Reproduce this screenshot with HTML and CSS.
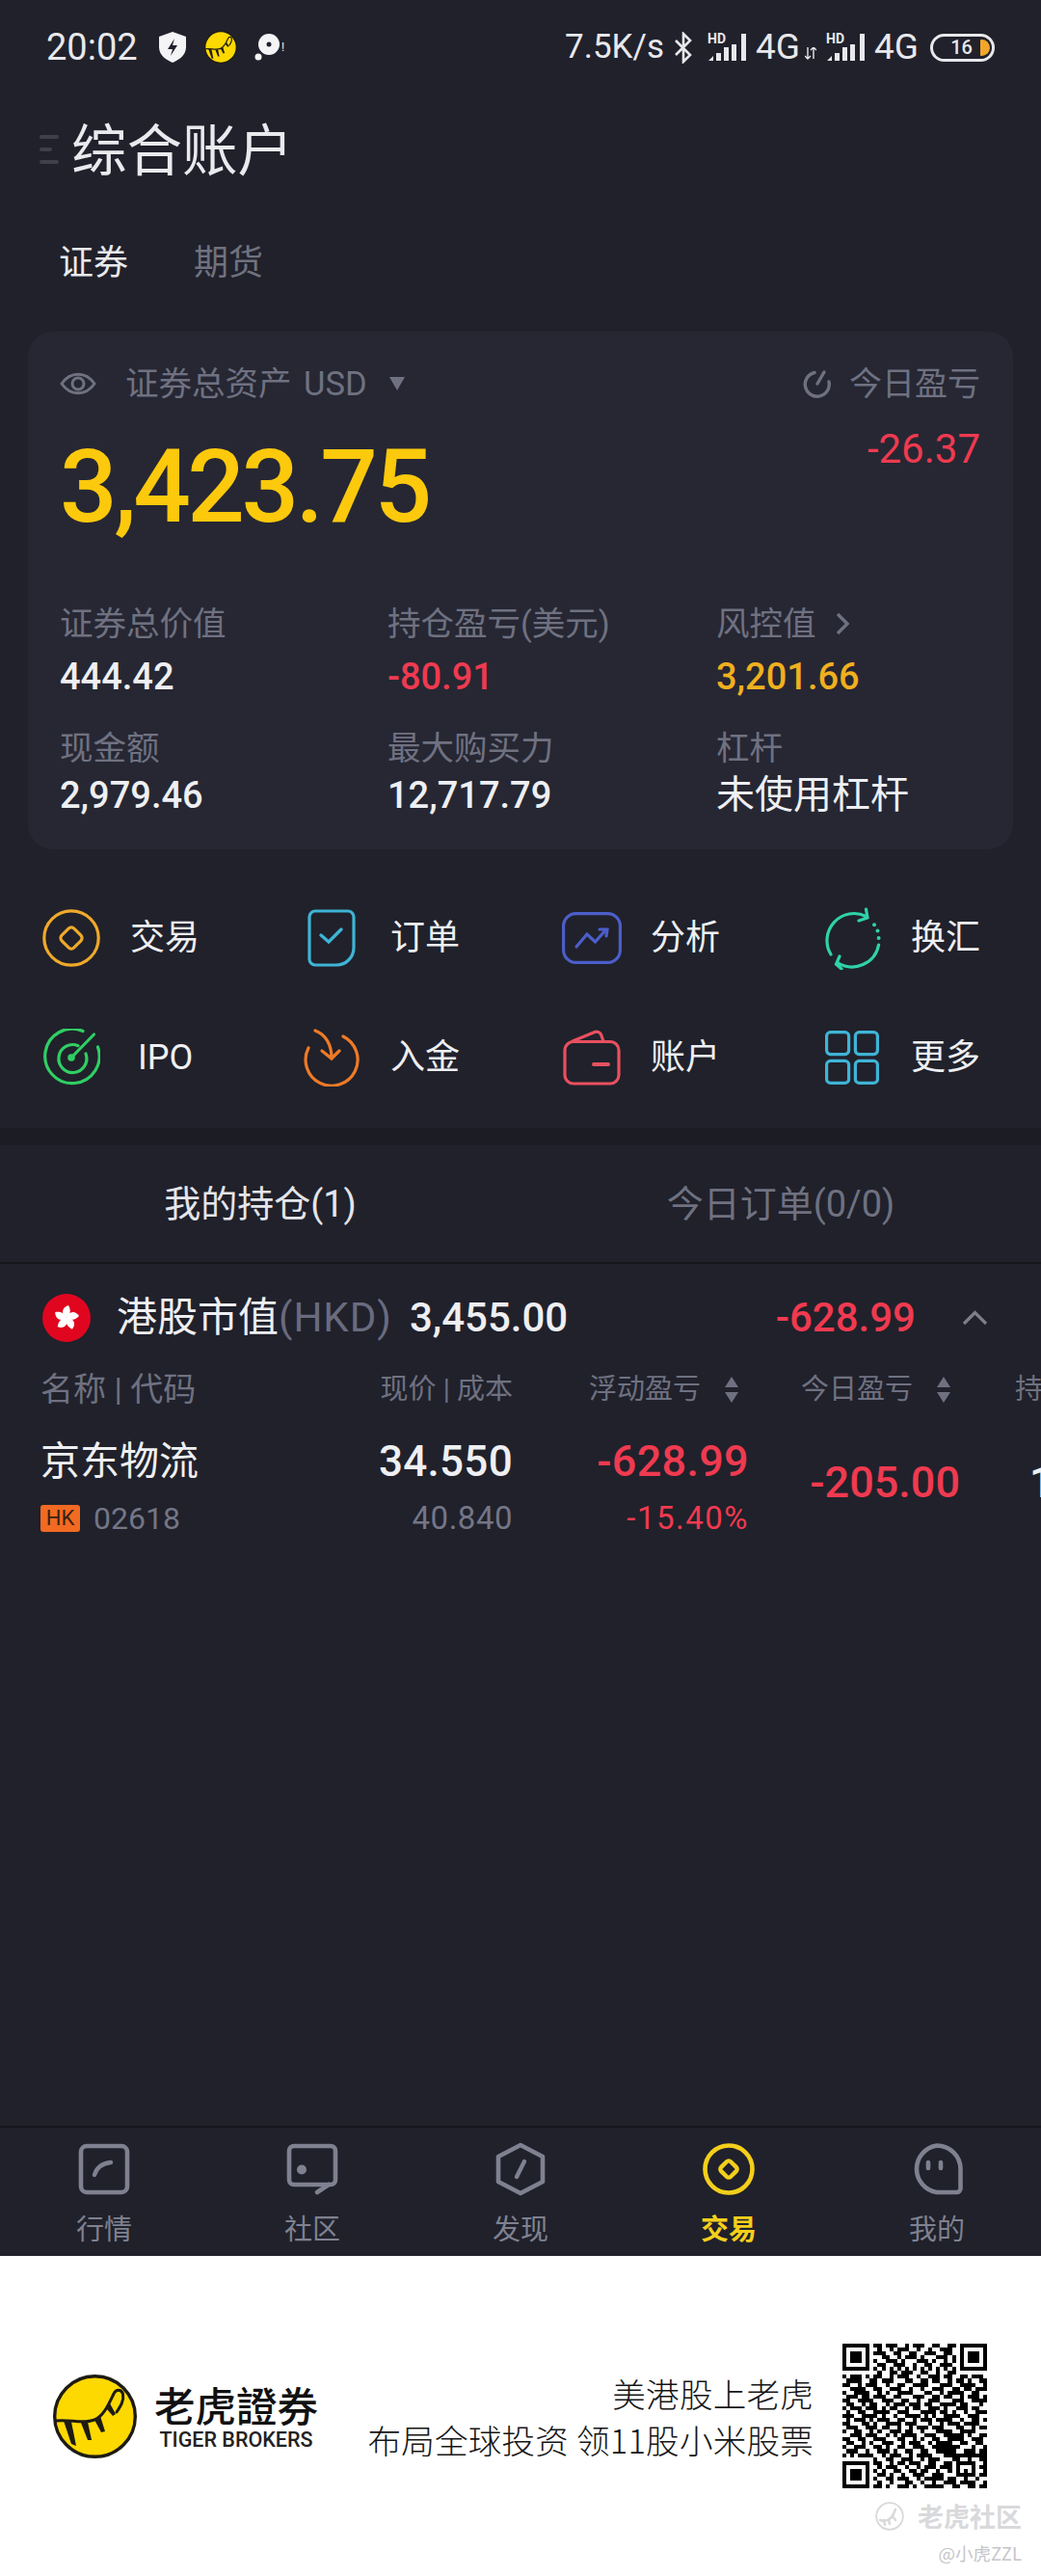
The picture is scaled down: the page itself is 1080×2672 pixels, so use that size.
FILE: index.html
```html
<!DOCTYPE html>
<html lang="zh-CN">
<head>
<meta charset="utf-8">
<title>综合账户</title>
<link rel="stylesheet" href="styles.css">
</head>
<body>
<svg class="defs" width="0" height="0" aria-hidden="true">
  <defs>
    <symbol id="tiger" viewBox="0 0 87 87">
      <circle cx="43.5" cy="43.5" r="41.8" fill="#fdd900" stroke="#1d1b14" stroke-width="3.4"/>
      <path d="M3 48C18 46 30 52 43 47C53 43 58 30 63 20C65 15 71 15 72.500 20C74 27 70 33 66 39" fill="none" stroke="#1d1b14" stroke-width="3" stroke-linecap="round"/>
      <path d="M11 48L19 49L24 74L19 72Z" fill="#1d1b14"/>
      <path d="M29 50L36 49L40 68L36 68Z" fill="#1d1b14"/>
      <path d="M43 47L49 43L54 59L50 60Z" fill="#1d1b14"/>
      <path d="M56 36L59 30L65 41L62 43Z" fill="#1d1b14"/>
    </symbol>
    <symbol id="petal" viewBox="0 0 50 50">
      <path d="M25 25C19 21 20 14 27 12C30 17 29 22 25 25Z" fill="#fff"/>
    </symbol>
  </defs>
</svg>
<div class="phone">
  <div class="app">
    <div class="status">
      <div class="status-group">
        <span class="clock">20:02</span>
        <svg class="st-shield" viewBox="0 0 28 32"><path d="M14 0L28 5V16C28 24 21 29 14 32C7 29 0 24 0 16V5Z" fill="#f4f4f6"/><path d="M16 7L9 18H14L12 25L19 14H14Z" fill="#20212b"/></svg>
        <svg class="st-coin"><use href="#tiger"/></svg>
        <span class="st-disc">
          <svg class="st-disc-icon" viewBox="0 0 26 28"><circle cx="15" cy="11" r="11" fill="#f4f4f6"/><circle cx="15" cy="11" r="2.500" fill="#20212b"/><circle cx="4" cy="24" r="3.500" fill="#f4f4f6"/></svg>
          <span class="st-bang">!</span>
        </span>
      </div>
      <div class="status-group status-right">
        <span class="speed">7.5K/s</span>
        <svg class="st-bt" viewBox="0 0 20 33"><path d="M2 9L17 24L10 31V2L17 9L2 24" fill="none" stroke="#e8e8ec" stroke-width="2.600"/></svg>
        <span class="signal">
          <span class="hd">HD</span>
          <svg class="bars" viewBox="0 0 41 30"><path d="M1 29L6 24V29ZM9 21H14V29H9ZM17 15H22V29H17ZM25 12H30V29H25ZM35 1H40V29H35Z" fill="#e8e8ec"/></svg>
        </span>
        <span class="net">4G</span>
        <svg class="st-arrows" viewBox="0 0 12 13"><path d="M3 0V12M0 9L3 12L6 9M9 12V0M6 3L9 0L12 3" fill="none" stroke="#e8e8ec" stroke-width="1.400"/></svg>
        <span class="signal signal-b">
          <span class="hd">HD</span>
          <svg class="bars" viewBox="0 0 41 30"><path d="M1 29L6 24V29ZM9 21H14V29H9ZM17 15H22V29H17ZM25 12H30V29H25ZM35 1H40V29H35Z" fill="#e8e8ec"/></svg>
        </span>
        <span class="net">4G</span>
        <span class="battery"><span class="battery-num">16</span><span class="battery-fill"></span></span>
      </div>
    </div>

    <header class="title-row">
      <span class="menu-bars"><i></i><i class="short"></i><i></i></span>
      <h1 class="title">综合账户</h1>
    </header>

    <nav class="seg">
      <span class="seg-on">证券</span>
      <span class="seg-off">期货</span>
    </nav>

    <section class="card">
      <div class="card-head">
        <div>
          <div class="asset-label">
            <svg class="eye" viewBox="0 0 38 28"><path d="M2 14C11 1 27 1 36 14C27 27 11 27 2 14Z" fill="none" stroke="#6f7181" stroke-width="3"/><circle cx="19" cy="14" r="6" fill="none" stroke="#6f7181" stroke-width="3"/></svg>
            <span class="asset-text">证券总资产 USD</span>
            <svg class="caret" viewBox="0 0 16 14"><path d="M0 0H16L8 14Z" fill="#6f7181"/></svg>
          </div>
          <div class="big">3,423.75</div>
        </div>
        <div class="head-right">
          <div class="asset-label">
            <svg class="refresh" viewBox="0 0 30 30"><path d="M12 3.500A12.500 12.500 0 1 0 27 13" fill="none" stroke="#6f7181" stroke-width="3.400" stroke-linecap="round"/><path d="M22 3L15 15" fill="none" stroke="#6f7181" stroke-width="3.400" stroke-linecap="round"/></svg>
            <span>今日盈亏</span>
          </div>
          <div class="today red">-26.37</div>
        </div>
      </div>
      <div class="stats">
        <div class="stat">
          <div class="stat-label">证券总价值</div>
          <div class="stat-val">444.42</div>
        </div>
        <div class="stat">
          <div class="stat-label">持仓盈亏(美元)</div>
          <div class="stat-val red">-80.91</div>
        </div>
        <div class="stat">
          <div class="stat-label">风控值<svg class="more" viewBox="0 0 14 24"><path d="M2 2L12 12L2 22" fill="none" stroke="#6f7181" stroke-width="3.400"/></svg></div>
          <div class="stat-val gold">3,201.66</div>
        </div>
        <div class="stat stat-low">
          <div class="stat-label">现金额</div>
          <div class="stat-val">2,979.46</div>
        </div>
        <div class="stat stat-low">
          <div class="stat-label">最大购买力</div>
          <div class="stat-val">12,717.79</div>
        </div>
        <div class="stat stat-low">
          <div class="stat-label">杠杆</div>
          <div class="stat-val stat-cjk">未使用杠杆</div>
        </div>
      </div>
    </section>

    <section class="tools">
      <div class="tool">
        <span class="tool-icon"><svg class="ti-60" viewBox="0 0 60 60"><circle cx="30" cy="30" r="28.200" fill="none" stroke="#efa92a" stroke-width="3.200"/><rect x="21" y="21" width="18" height="18" rx="4" transform="rotate(45 30 30)" fill="none" stroke="#efa92a" stroke-width="3.200"/></svg></span>
        <span>交易</span>
      </div>
      <div class="tool">
        <span class="tool-icon"><svg class="ti-doc" viewBox="0 0 50 60"><path d="M8 2H42A6 6 0 0 1 48 8V40C48 50 40 58 30 58H8A6 6 0 0 1 2 52V8A6 6 0 0 1 8 2Z" fill="none" stroke="#3fb4d6" stroke-width="3.200"/><path d="M14 27L22 34L35 21" fill="none" stroke="#3fb4d6" stroke-width="3.400" stroke-linecap="round"/></svg></span>
        <span>订单</span>
      </div>
      <div class="tool">
        <span class="tool-icon"><svg class="ti-chart" viewBox="0 0 62 54"><rect x="1.600" y="1.600" width="58.800" height="50.800" rx="13" fill="none" stroke="#4c5ec9" stroke-width="3.200"/><path d="M15 36L26 23L34.500 31L46 18M39 18H47L46 25" fill="none" stroke="#4c5ec9" stroke-width="3.200" stroke-linecap="round"/></svg></span>
        <span>分析</span>
      </div>
      <div class="tool">
        <span class="tool-icon"><svg class="ti-swap" viewBox="0 0 64 66"><path d="M10 50A28 28 0 0 1 46.500 10.500M46.500 3L48 12L39 15M59.600 40A28 28 0 0 1 17 58.500M19 52L15.500 60L21 65" fill="none" stroke="#2fd3a9" stroke-width="3.200" stroke-linecap="round"/><circle cx="55" cy="19.300" r="2" fill="#2fd3a9"/><circle cx="58.500" cy="25.500" r="2" fill="#2fd3a9"/><circle cx="59.600" cy="33" r="2" fill="#2fd3a9"/></svg></span>
        <span>换汇</span>
      </div>
      <div class="tool">
        <span class="tool-icon"><svg class="ti-60" viewBox="0 0 60 60"><path d="M42 2.500A28.200 28.200 0 1 0 57.500 19" fill="none" stroke="#2fcf63" stroke-width="3.200" stroke-linecap="round"/><path d="M37 17.700A14.500 14.500 0 1 0 45 26" fill="none" stroke="#2fcf63" stroke-width="3.200" stroke-linecap="round"/><path d="M30 30L53.500 6" fill="none" stroke="#2fcf63" stroke-width="3.200" stroke-linecap="round"/><circle cx="30" cy="30" r="3.800" fill="#2fcf63"/></svg></span>
        <span class="tool-ipo">IPO</span>
      </div>
      <div class="tool">
        <span class="tool-icon"><svg class="ti-in" viewBox="0 0 58 60"><path d="M5 20A27 27 0 1 0 41 8" fill="none" stroke="#ee7a26" stroke-width="3.200" stroke-linecap="round"/><path d="M12 2C23 6 29 17 29 30M19 23L29 31L37 23" fill="none" stroke="#ee7a26" stroke-width="3.200" stroke-linecap="round"/></svg></span>
        <span>入金</span>
      </div>
      <div class="tool">
        <span class="tool-icon"><svg class="ti-wallet" viewBox="0 0 60 58"><rect x="2" y="12.500" width="56" height="43.500" rx="9" fill="none" stroke="#e8505f" stroke-width="3.200"/><path d="M10 12L33 2.500C36 1.500 38.500 3 39.500 5L42 12" fill="none" stroke="#e8505f" stroke-width="3.200" stroke-linecap="round"/><path d="M32 36H47" fill="none" stroke="#e8505f" stroke-width="4" stroke-linecap="round"/></svg></span>
        <span>账户</span>
      </div>
      <div class="tool">
        <span class="tool-icon"><svg class="ti-grid" viewBox="0 0 56 56"><rect x="1.600" y="1.600" width="23" height="23" rx="4" fill="none" stroke="#3fb4d6" stroke-width="3.200"/><rect x="31.400" y="1.600" width="23" height="23" rx="4" fill="none" stroke="#3fb4d6" stroke-width="3.200"/><rect x="1.600" y="31.400" width="23" height="23" rx="4" fill="none" stroke="#3fb4d6" stroke-width="3.200"/><rect x="31.400" y="31.400" width="23" height="23" rx="4" fill="none" stroke="#3fb4d6" stroke-width="3.200"/></svg></span>
        <span>更多</span>
      </div>
    </section>

    <div class="strip"></div>

    <nav class="pos-tabs">
      <span class="pos-on">我的持仓(1)</span>
      <span class="pos-off">今日订单(0/0)</span>
    </nav>

    <section class="holdings">
      <div class="market">
        <svg class="flag" viewBox="0 0 50 50">
          <circle cx="25" cy="25" r="25" fill="#e1061f"/>
          <g class="petals">
            <use href="#petal" width="50" height="50"/>
            <use href="#petal" width="50" height="50" transform="rotate(72 25 25)"/>
            <use href="#petal" width="50" height="50" transform="rotate(144 25 25)"/>
            <use href="#petal" width="50" height="50" transform="rotate(216 25 25)"/>
            <use href="#petal" width="50" height="50" transform="rotate(288 25 25)"/>
          </g>
        </svg>
        <span class="market-name">港股市值<span class="muted">(HKD)</span></span>
        <span class="market-val">3,455.00</span>
        <span class="market-pl red">-628.99</span>
        <svg class="chev" viewBox="0 0 27 16"><path d="M2 14L13.500 2.500L25 14" fill="none" stroke="#7d7f8c" stroke-width="3.200"/></svg>
      </div>

      <div class="cols">
        <span class="col-name">名称 | 代码</span>
        <span class="col-head col-price">现价 | 成本</span>
        <span class="col-head col-float">浮动盈亏<svg class="sort" viewBox="0 0 14 27"><path d="M7 0L14 11H0ZM7 27L0 16H14Z" fill="#6f7181"/></svg></span>
        <span class="col-head col-today">今日盈亏<svg class="sort" viewBox="0 0 14 27"><path d="M7 0L14 11H0ZM7 27L0 16H14Z" fill="#6f7181"/></svg></span>
        <span class="col-head col-qty">持仓</span>
      </div>

      <div class="row">
        <div class="cell-name">
          <div class="stock">京东物流</div>
          <div class="code"><span class="hk">HK</span><span>02618</span></div>
        </div>
        <div class="cell-num">
          <div class="num-a">34.550</div>
          <div class="num-b">40.840</div>
        </div>
        <div class="cell-num">
          <div class="num-a red">-628.99</div>
          <div class="num-b red">-15.40%</div>
        </div>
        <div class="cell-today red">-205.00</div>
        <div class="cell-qty">100</div>
      </div>
    </section>

    <nav class="tabbar">
      <div class="tab">
        <svg class="tab-icon" viewBox="0 0 54 54"><rect x="3" y="3" width="48" height="48" rx="6" fill="none" stroke="#7f8190" stroke-width="4.600"/><path d="M17 33C19 26 25 21 34 20" fill="none" stroke="#7f8190" stroke-width="4.400" stroke-linecap="round"/></svg>
        <span>行情</span>
      </div>
      <div class="tab">
        <svg class="tab-icon" viewBox="0 0 54 54"><rect x="3" y="3" width="48" height="40" rx="5" fill="none" stroke="#7f8190" stroke-width="4.600"/><path d="M44 43L32 51" fill="none" stroke="#7f8190" stroke-width="4.600" stroke-linecap="round"/><circle cx="16" cy="27.500" r="5" fill="#7f8190"/></svg>
        <span>社区</span>
      </div>
      <div class="tab">
        <svg class="tab-icon" viewBox="0 0 54 56"><path d="M27 3L50 15V41L27 53L4 41V15Z" fill="none" stroke="#7f8190" stroke-width="4.600" stroke-linejoin="round"/><path d="M31 20L23 36" fill="none" stroke="#7f8190" stroke-width="4.400" stroke-linecap="round"/></svg>
        <span>发现</span>
      </div>
      <div class="tab tab-on">
        <svg class="tab-icon" viewBox="0 0 54 54"><circle cx="27" cy="27" r="24.500" fill="none" stroke="#f4cf1b" stroke-width="4.600"/><rect x="20" y="20" width="14" height="14" rx="3" transform="rotate(45 27 27)" fill="none" stroke="#f4cf1b" stroke-width="4.400"/></svg>
        <span>交易</span>
      </div>
      <div class="tab">
        <svg class="tab-icon" viewBox="0 0 54 54"><path d="M27 2.500A24.500 24.500 0 0 1 51.500 27V47A4 4 0 0 1 47.500 51H27A24.500 24.500 0 0 1 27 2.500Z" fill="none" stroke="#7f8190" stroke-width="4.600"/><path d="M18 20V26M31 20V26" fill="none" stroke="#7f8190" stroke-width="4.600" stroke-linecap="round"/></svg>
        <span>我的</span>
      </div>
    </nav>
  </div>

  <footer class="promo">
    <div class="brand">
      <svg class="brand-logo"><use href="#tiger"/></svg>
      <div class="brand-text">
        <div class="brand-cn">老虎證券</div>
        <div class="brand-en">TIGER BROKERS</div>
      </div>
    </div>
    <div class="slogan">
      <div>美港股上老虎</div>
      <div>布局全球投资 领11股小米股票</div>
    </div>
    <svg class="qr" viewBox="0 0 37 37" shape-rendering="crispEdges">
      <path fill="#000" d="M0 0h7v7H0zM1 1v5h5V1zM2 2h3v3H2zM30 0h7v7h-7zM31 1v5h5V1zM32 2h3v3h-3zM0 30h7v7H0zM1 31v5h5v-5zM2 32h3v3H2z" fill-rule="evenodd"/>
      <path fill="none" stroke="#000" d="M8 .5h2M11 .5h3M16 .5h1M18 .5h3M23 .5h2M27 .5h2M9 1.500h1M12 1.500h1M14 1.500h3M19 1.500h1M22 1.500h1M25 1.500h3M8 2.500h3M13 2.500h2M17 2.500h2M21 2.500h3M26 2.500h2M10 3.500h2M14 3.500h1M16 3.500h3M20 3.500h1M24 3.500h3M28 3.500h1M8 4.500h1M11 4.500h3M15 4.500h1M19 4.500h3M23 4.500h1M26 4.500h1M28 4.500h1M9 5.500h2M13 5.500h3M18 5.500h1M21 5.500h2M25 5.500h3M8 6.500h1M10 6.500h1M12 6.500h1M14 6.500h1M16 6.500h1M18 6.500h1M20 6.500h1M22 6.500h1M24 6.500h1M26 6.500h1M28 6.500h1M9 7.500h1M12 7.500h2M15 7.500h3M20 7.500h2M24 7.500h1M27 7.500h2M0 8.500h1M2 8.500h3M6 8.500h1M8 8.500h2M12 8.500h1M14 8.500h3M19 8.500h1M22 8.500h3M26 8.500h2M30 8.500h2M33 8.500h3M1 9.500h4M7 9.500h2M10 9.500h3M16 9.500h2M20 9.500h2M23 9.500h2M27 9.500h1M29 9.500h2M32 9.500h1M35 9.500h2M0 10.500h2M4 10.500h1M6 10.500h3M11 10.500h1M14 10.500h2M18 10.500h4M25 10.500h3M30 10.500h4M36 10.500h1M2 11.500h4M8 11.500h2M12 11.500h3M17 11.500h1M20 11.500h1M23 11.500h3M28 11.500h2M31 11.500h2M34 11.500h3M0 12.500h1M3 12.500h4M9 12.500h1M11 12.500h1M14 12.500h4M21 12.500h2M25 12.500h1M27 12.500h4M33 12.500h2M1 13.500h3M5 13.500h2M8 13.500h3M13 13.500h2M18 13.500h3M23 13.500h2M26 13.500h2M30 13.500h1M32 13.500h3M36 13.500h1M0 14.500h2M4 14.500h4M10 14.500h3M15 14.500h2M19 14.500h1M22 14.500h3M28 14.500h3M33 14.500h4M1 15.500h2M5 15.500h1M7 15.500h2M11 15.500h1M13 15.500h3M17 15.500h3M21 15.500h2M25 15.500h4M30 15.500h2M35 15.500h1M0 16.500h1M2 16.500h3M6 16.500h3M10 16.500h1M12 16.500h2M16 16.500h1M18 16.500h2M22 16.500h3M26 16.500h1M29 16.500h3M33 16.500h2M1 17.500h1M4 17.500h2M8 17.500h4M14 17.500h3M20 17.500h4M25 17.500h2M28 17.500h1M31 17.500h1M34 17.500h3M0 18.500h3M5 18.500h4M10 18.500h1M13 18.500h1M16 18.500h4M21 18.500h1M23 18.500h1M26 18.500h4M32 18.500h3M1 19.500h1M3 19.500h3M7 19.500h1M9 19.500h3M14 19.500h2M18 19.500h1M20 19.500h3M24 19.500h4M30 19.500h1M33 19.500h2M36 19.500h1M0 20.500h2M5 20.500h2M8 20.500h1M11 20.500h4M16 20.500h3M22 20.500h1M25 20.500h1M27 20.500h3M31 20.500h4M1 21.500h3M6 21.500h3M10 21.500h2M14 21.500h1M17 21.500h1M19 21.500h3M23 21.500h3M29 21.500h2M33 21.500h1M35 21.500h2M0 22.500h1M3 22.500h2M7 22.500h1M9 22.500h1M12 22.500h3M16 22.500h2M20 22.500h1M24 22.500h4M30 22.500h4M2 23.500h3M6 23.500h3M11 23.500h1M13 23.500h1M15 23.500h4M21 23.500h3M26 23.500h5M32 23.500h1M35 23.500h2M0 24.500h2M4 24.500h2M8 24.500h3M14 24.500h2M18 24.500h1M20 24.500h1M23 24.500h2M27 24.500h4M33 24.500h3M1 25.500h2M5 25.500h1M7 25.500h1M10 25.500h3M15 25.500h1M17 25.500h3M22 25.500h1M24 25.500h4M30 25.500h2M34 25.500h2M0 26.500h1M3 26.500h3M8 26.500h2M11 26.500h1M14 26.500h2M18 26.500h3M23 26.500h7M33 26.500h1M36 26.500h1M1 27.500h3M6 27.500h1M9 27.500h3M13 27.500h1M16 27.500h2M20 27.500h2M24 27.500h5M31 27.500h3M35 27.500h2M0 28.500h1M2 28.500h1M4 28.500h4M10 28.500h1M12 28.500h3M17 28.500h1M19 28.500h4M26 28.500h11M8 29.500h1M11 29.500h2M15 29.500h3M20 29.500h1M22 29.500h3M28 29.500h2M32 29.500h1M35 29.500h2M8 30.500h2M12 30.500h1M14 30.500h2M17 30.500h3M22 30.500h2M26 30.500h2M29 30.500h5M36 30.500h1M9 31.500h1M11 31.500h3M16 31.500h1M19 31.500h1M21 31.500h3M25 31.500h3M29 31.500h1M33 31.500h1M35 31.500h2M8 32.500h1M10 32.500h1M13 32.500h2M17 32.500h2M20 32.500h2M24 32.500h1M27 32.500h1M29 32.500h1M31 32.500h1M33 32.500h1M36 32.500h1M9 33.500h2M12 33.500h1M15 33.500h1M18 33.500h3M23 33.500h3M29 33.500h5M35 33.500h2M8 34.500h1M11 34.500h2M14 34.500h3M19 34.500h1M21 34.500h5M27 34.500h2M31 34.500h1M34 34.500h1M9 35.500h1M12 35.500h1M16 35.500h2M20 35.500h1M23 35.500h1M26 35.500h3M30 35.500h4M36 35.500h1M8 36.500h2M11 36.500h1M14 36.500h3M18 36.500h1M21 36.500h5M28 36.500h2M32 36.500h2M35 36.500h2"/>
    </svg>
    <div class="mark">
      <div class="mark-top">
        <svg class="mark-logo" viewBox="0 0 30 30"><circle cx="15" cy="15" r="13.800" fill="none" stroke="#d9d9dc" stroke-width="1.800"/><path d="M5 19C11 21 17 20 21 8M9 19L10 24M14 19L15 23M18 15L21 19" fill="none" stroke="#d9d9dc" stroke-width="2.400" stroke-linecap="round"/></svg>
        <span class="mark-cn">老虎社区</span>
      </div>
      <div class="mark-user">@小虎ZZL</div>
    </div>
  </footer>
</div>
</body>
</html>
```
FILE: styles.css
```css
* { box-sizing: border-box; }
html, body { margin: 0; padding: 0; }
body {
  width: 1080px;
  height: 2672px;
  overflow: hidden;
  font-family: Roboto, "Noto Sans CJK SC", sans-serif;
  background: #ffffff;
}
.defs { position: absolute; }
.phone { width: 1080px; height: 2672px; display: flex; flex-direction: column; }
.app {
  height: 2340px;
  background: #20212b;
  color: #eeeff2;
  display: flex;
  flex-direction: column;
  overflow: hidden;
}
.red { color: #ef3a50; }
.gold { color: #f0b01e; }
.muted { color: #696b7f; letter-spacing: 1px; }

/* status bar */
.status {
  height: 98px;
  padding: 0 48px;
  display: flex;
  align-items: center;
  justify-content: space-between;
}
.status-group { display: flex; align-items: center; }
.clock { font-size: 38px; line-height: 44px; color: #e8e8ec; width: 117px; }
.st-shield { width: 28px; height: 32px; }
.st-coin { width: 34px; height: 34px; margin-left: 19px; }
.st-disc { display: flex; align-items: center; margin-left: 18px; }
.st-disc-icon { width: 26px; height: 28px; }
.st-bang { font-size: 12px; line-height: 14px; color: #f4f4f6; margin-left: 2px; }
.speed { font-size: 35px; line-height: 40px; color: #e8e8ec; width: 113px; }
.st-bt { width: 20px; height: 33px; }
.signal { position: relative; width: 41px; height: 30px; margin-left: 15px; }
.signal-b { margin-left: 10px; }
.bars { display: block; width: 41px; height: 30px; }
.hd { position: absolute; left: 0; top: 0; font-size: 14px; font-weight: 700; line-height: 12px; color: #e8e8ec; }
.net { font-size: 37px; line-height: 40px; color: #e8e8ec; margin-left: 9px; width: 47px; }
.st-arrows { width: 12px; height: 13px; margin: 12px 0 0 4px; }
.battery {
  width: 67px;
  height: 29px;
  border: 3px solid #e8e8ec;
  border-radius: 15px;
  margin-left: 11px;
  position: relative;
  display: flex;
  align-items: center;
  justify-content: center;
}
.battery-num { font-size: 20px; font-weight: 500; line-height: 23px; color: #e8e8ec; margin-right: 2px; }
.battery-fill {
  position: absolute;
  right: 2px;
  top: 3px;
  width: 10px;
  height: 17px;
  background: #f2a62b;
  border-radius: 1px 9px 9px 1px;
}

/* title */
.title-row { height: 118px; padding-left: 41px; display: flex; align-items: center; gap: 13px; }
.menu-bars { width: 20px; display: flex; flex-direction: column; gap: 9px; margin-top: -4px; }
.menu-bars i { display: block; width: 20px; height: 4px; background: #3f404c; border-radius: 2px; }
.menu-bars .short { width: 13px; }
.title { margin: 2px 0 0; font-size: 57.500px; font-weight: 400; line-height: 70px; color: #e9eaee; }
.seg {
  height: 114px;
  margin-bottom: 14px;
  padding: 0 0 0 61px;
  display: flex;
  align-items: center;
  gap: 68px;
  font-size: 36px;
  line-height: 50px;
}
.seg-on { color: #e9eaee; }
.seg-off { color: #70727f; }

/* card */
.card {
  width: 1022px;
  height: 537px;
  margin-left: 29px;
  padding: 34px 34px 0 33px;
  background: #262733;
  border-radius: 26px;
}
.card-head { display: flex; justify-content: space-between; }
.asset-label { display: flex; align-items: center; height: 40px; font-size: 34px; line-height: 40px; color: #6f7181; white-space: nowrap; }
.asset-text { font-size: 34.500px; word-spacing: 4px; }
.eye { width: 38px; height: 28px; margin-right: 30px; }
.caret { width: 16px; height: 14px; margin-left: 23px; }
.big { margin-top: 38px; font-size: 105px; font-weight: 500; line-height: 100px; letter-spacing: -3.500px; color: #fcc90c; }
.head-right { display: flex; flex-direction: column; align-items: flex-end; }
.refresh { width: 30px; height: 30px; margin-right: 18px; }
.today { margin-top: 28px; font-size: 42px; line-height: 40px; }
.stats {
  margin-top: 71px;
  display: grid;
  grid-template-columns: 340px 341px 1fr;
  row-gap: 32px;
}
.stat-label { display: flex; align-items: center; height: 40px; font-size: 34.500px; line-height: 40px; color: #6f7181; }
.more { width: 14px; height: 24px; margin-left: 20px; }
.stat-val { margin-top: 13px; font-size: 38px; font-weight: 500; line-height: 44px; }
.stat-low .stat-val { margin-top: 7px; }
.stat-low .stat-cjk { font-size: 40px; font-weight: 400; }

/* shortcuts */
.tools {
  margin-top: 30px;
  padding-left: 44px;
  display: grid;
  grid-template-columns: repeat(4, 270px);
  grid-auto-rows: 124px;
  margin-bottom: 11px;
}
.tool { display: flex; align-items: center; font-size: 36px; line-height: 50px; color: #eeeff2; }
.tool-icon { width: 60px; height: 70px; margin-right: 31px; display: flex; align-items: center; justify-content: center; flex: none; }
.ti-60 { width: 60px; height: 60px; }
.ti-doc { width: 50px; height: 60px; }
.ti-chart { width: 62px; height: 54px; flex: none; }
.ti-swap { width: 64px; height: 66px; flex: none; }
.ti-in { width: 58px; height: 60px; }
.ti-wallet { width: 60px; height: 58px; }
.ti-grid { width: 56px; height: 56px; }
.tool-ipo { margin-left: 8px; }
.strip { height: 18px; background: #1b1c24; flex: none; }

/* position tabs */
.pos-tabs {
  height: 123px;
  display: grid;
  grid-template-columns: 1fr 1fr;
  align-items: center;
  justify-items: center;
  border-bottom: 2px solid #15161c;
  font-size: 38px;
  line-height: 50px;
}
.pos-on { color: #e4e5ea; }
.pos-off { color: #6f7181; }

/* holdings */
.holdings { flex: 1; }
.market { height: 110px; padding: 2px 55px 0 44px; display: flex; align-items: center; }
.flag { width: 50px; height: 50px; flex: none; }
.market-name { margin-left: 27px; font-size: 42px; line-height: 50px; color: #eeeff2; }
.market-val { margin-left: 18px; font-size: 42px; font-weight: 500; line-height: 50px; }
.market-pl { margin-left: auto; font-size: 42px; font-weight: 500; line-height: 50px; }
.chev { width: 27px; height: 16px; margin-left: 48px; }
.cols, .row {
  display: grid;
  grid-template-columns: 350px 140px 245px 219px auto;
  padding-left: 42px;
}
.cols { height: 38px; align-items: center; }
.col-name { font-size: 34px; line-height: 40px; color: #6f7181; white-space: nowrap; }
.col-head { display: flex; align-items: center; justify-content: flex-end; font-size: 29px; line-height: 38px; color: #6f7181; white-space: nowrap; }
.sort { width: 14px; height: 27px; margin-left: 25px; }
.col-float { padding-right: 11px; }
.col-today { padding-right: 10px; }
.col-qty { margin-left: 57px; justify-content: flex-start; }
.row { margin-top: 32px; }
.stock { font-size: 41px; line-height: 50px; }
.code { margin-top: 14px; display: flex; align-items: center; height: 40px; font-size: 32px; color: #747687; }
.hk {
  width: 41px;
  height: 28px;
  margin-right: 14px;
  background: #f26a22;
  border-radius: 3px;
  font-size: 22px;
  line-height: 28px;
  text-align: center;
  color: #3a2113;
}
.cell-num { text-align: right; white-space: nowrap; }
.num-a { font-size: 45px; font-weight: 500; line-height: 50px; letter-spacing: .3px; }
.cell-num:nth-child(2) .num-a { font-size: 44px; }
.num-b { margin-top: 14px; font-size: 33px; line-height: 40px; letter-spacing: .5px; color: #747687; }
.num-b.red { color: #ef3a50; letter-spacing: 1.500px; }
.cell-today { align-self: center; margin-bottom: 11px; font-size: 45px; font-weight: 500; line-height: 50px; text-align: right; }
.cell-qty { align-self: center; margin: 0 0 11px 72px; font-size: 44px; font-weight: 500; line-height: 50px; }

/* tab bar */
.tabbar {
  height: 135px;
  flex: none;
  border-top: 2px solid #15161c;
  display: grid;
  grid-template-columns: repeat(5, 216px);
}
.tab {
  padding-top: 15px;
  display: flex;
  flex-direction: column;
  align-items: center;
  font-size: 29px;
  line-height: 34px;
  color: #7f8190;
}
.tab-icon { width: 54px; height: 56px; margin-bottom: 18px; }
.tab-on { color: #f4cf1b; font-weight: 700; }

/* footer */
.promo {
  flex: 1;
  position: relative;
  padding: 0 56px 0 55px;
  background: #ffffff;
  color: #111;
  display: flex;
  align-items: center;
  justify-content: space-between;
  font-family: "Noto Sans CJK SC", sans-serif;
}
.brand { display: flex; align-items: center; gap: 18px; }
.brand-logo { width: 87px; height: 87px; }
.brand-text { text-align: center; }
.brand-cn { font-family: "Noto Sans CJK TC", sans-serif; font-size: 42.500px; font-weight: 500; line-height: 50px; white-space: nowrap; }
.brand-en { font-family: Roboto, sans-serif; font-size: 21.500px; font-weight: 500; line-height: 24px; color: #222; white-space: nowrap; }
.slogan { margin-left: auto; margin-right: 30px; text-align: right; font-size: 34.600px; font-weight: 300; letter-spacing: .2px; line-height: 48px; color: #161616; white-space: nowrap; }
.qr { width: 150px; height: 150px; flex: none; }
.mark { position: absolute; right: 20px; bottom: 12px; display: flex; flex-direction: column; align-items: flex-end; gap: 10px; }
.mark-top { display: flex; align-items: center; gap: 14px; }
.mark-logo { width: 30px; height: 30px; }
.mark-cn { font-size: 27px; font-weight: 700; line-height: 32px; color: #d9d9dc; }
.mark-user { font-size: 18.500px; line-height: 24px; color: #c6c6ca; }
```
